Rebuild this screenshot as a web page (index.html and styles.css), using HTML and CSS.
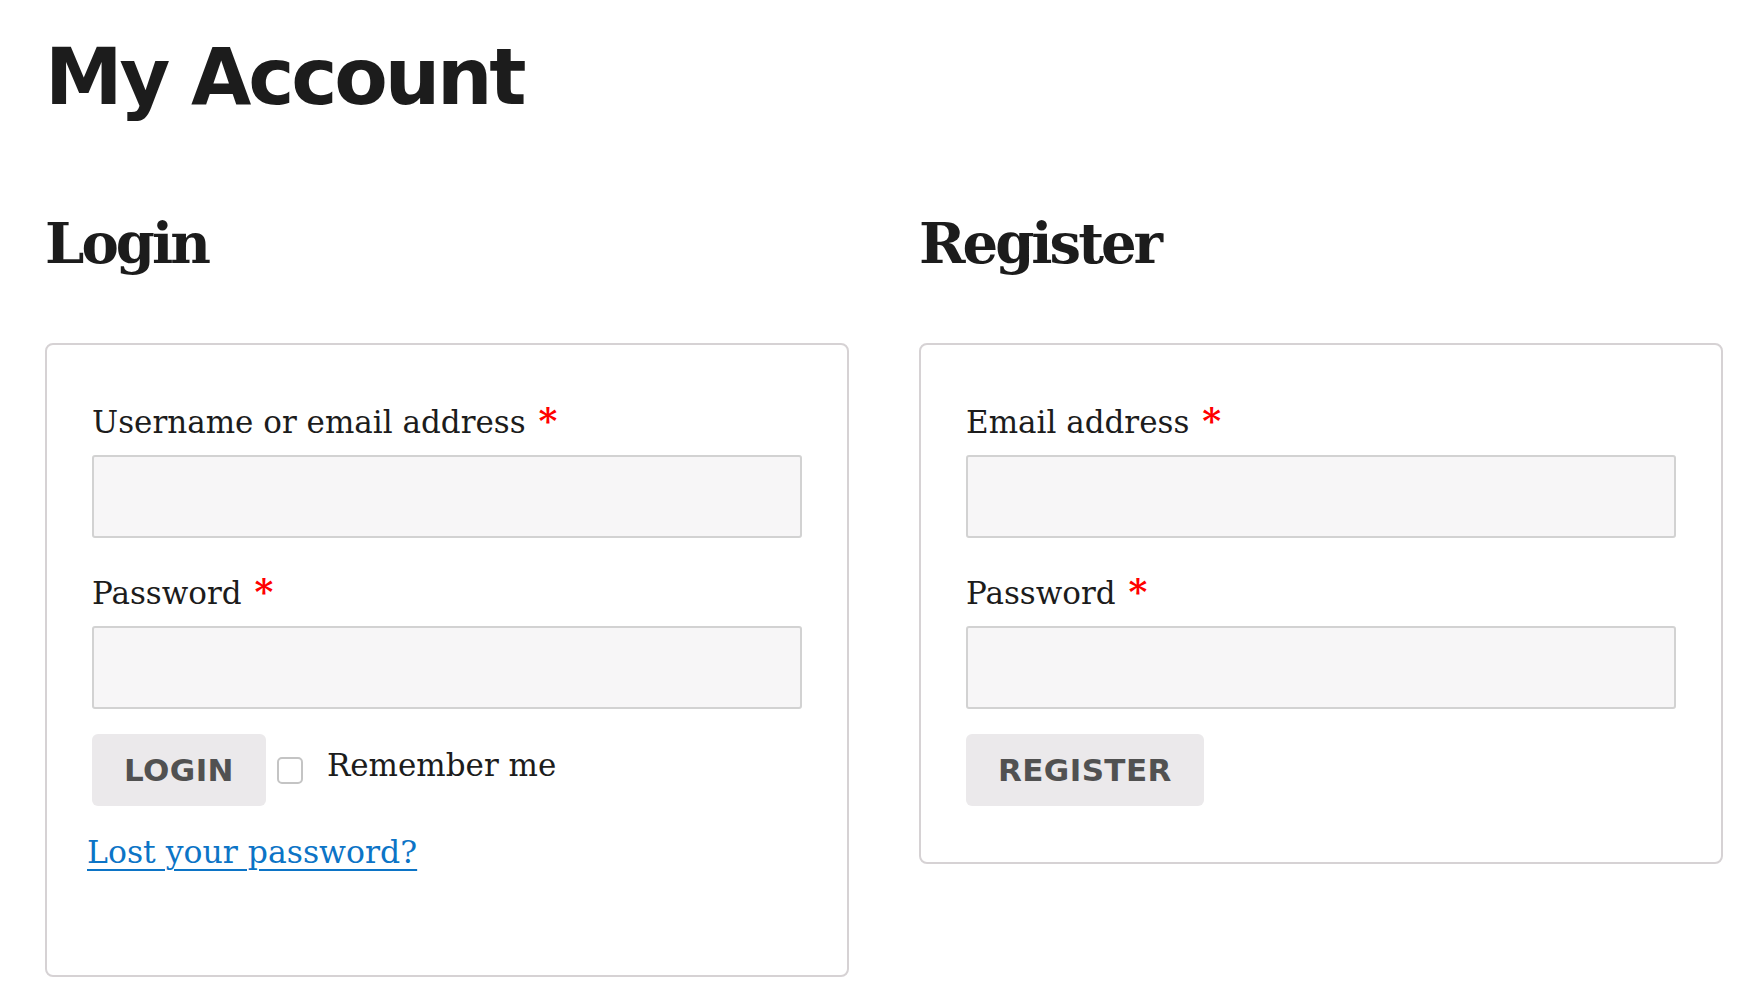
FILE: index.html
```html
<!DOCTYPE html>
<html lang="en">
<head>
<meta charset="utf-8">
<title>My Account</title>
<link rel="stylesheet" href="styles.css">
</head>
<body>
<main class="page">
  <h1 class="page-title">My Account</h1>
  <div class="cols">
    <section class="col">
      <h2 class="col-title">Login</h2>
      <form class="card">
        <div class="field">
          <label class="field-label" for="username">Username or email address <span class="req">*</span></label>
          <input class="field-input" type="text" id="username">
        </div>
        <div class="field">
          <label class="field-label" for="password">Password <span class="req">*</span></label>
          <input class="field-input" type="password" id="password">
        </div>
        <div class="actions">
          <button class="btn" type="button">Login</button>
          <label class="remember"><input class="check" type="checkbox"><span class="remember-text">Remember me</span></label>
        </div>
        <p class="lost"><a href="#">Lost your password?</a></p>
      </form>
    </section>
    <section class="col">
      <h2 class="col-title">Register</h2>
      <form class="card">
        <div class="field">
          <label class="field-label" for="reg-email">Email address <span class="req">*</span></label>
          <input class="field-input" type="email" id="reg-email">
        </div>
        <div class="field">
          <label class="field-label" for="reg-password">Password <span class="req">*</span></label>
          <input class="field-input" type="password" id="reg-password">
        </div>
        <div class="actions">
          <button class="btn" type="button">Register</button>
        </div>
      </form>
    </section>
  </div>
</main>
</body>
</html>
```
FILE: styles.css
```css
* { box-sizing: border-box; }

html, body {
  margin: 0;
  padding: 0;
  background: #ffffff;
}

body {
  font-family: "DejaVu Serif", "Liberation Serif", serif;
  color: #1c1c1c;
}

.page {
  padding: 38px 39px 0 45px;
}

.page-title {
  margin: 0;
  font-family: "DejaVu Sans", "Liberation Sans", sans-serif;
  font-weight: 700;
  font-size: 78px;
  line-height: 78px;
  letter-spacing: -3.2px;
  color: #1c1c1c;
}

.cols {
  display: grid;
  grid-template-columns: 1fr 1fr;
  column-gap: 70px;
  align-items: start;
  margin-top: 99px;
}

.col-title {
  margin: 0 0 72px;
  font-family: "DejaVu Serif", "Liberation Serif", serif;
  font-weight: 700;
  font-size: 56px;
  line-height: 56px;
  letter-spacing: -3px;
  color: #1c1c1c;
}

.card {
  border: 2px solid #d6d2d4;
  border-radius: 8px;
  padding: 57px 45px 56px;
}

.field + .field {
  margin-top: 35px;
}

.field-label {
  display: block;
  font-size: 31px;
  line-height: 40px;
  margin-bottom: 13px;
  letter-spacing: 0;
}

.req {
  color: #ff0000;
  font-weight: 700;
  font-size: 36px;
  line-height: 0;
  margin-left: 3px;
}

.field-input {
  display: block;
  width: 100%;
  height: 83px;
  margin: 0;
  border: 2px solid #d2d2d2;
  border-radius: 3px;
  background: #f7f6f7;
  font: inherit;
}

.actions {
  display: flex;
  align-items: center;
  margin-top: 25px;
}

.btn {
  height: 72px;
  padding: 0 32px;
  border: 0;
  border-radius: 6px;
  background: #ebe9eb;
  color: #515151;
  font-family: "DejaVu Sans", "Liberation Sans", sans-serif;
  font-weight: 700;
  font-size: 31px;
  text-transform: uppercase;
  letter-spacing: 0.4px;
}

.remember {
  display: flex;
  align-items: center;
  font-size: 31px;
  line-height: 40px;
}

.check {
  appearance: none;
  -webkit-appearance: none;
  width: 26px;
  height: 27px;
  margin: 0 24px 0 11px;
  border: 2px solid #c4c4c4;
  border-radius: 5px;
  background: #ffffff;
}

.remember-text {
  margin-bottom: 11px;
  letter-spacing: 0;
}

.lost {
  margin: 26px 0 47px -5px;
  font-size: 31.5px;
  line-height: 40px;
  letter-spacing: 0;
}

.lost a {
  color: #0c74c6;
  text-decoration: underline;
  text-underline-offset: 6px;
  text-decoration-thickness: 2px;
}
```
